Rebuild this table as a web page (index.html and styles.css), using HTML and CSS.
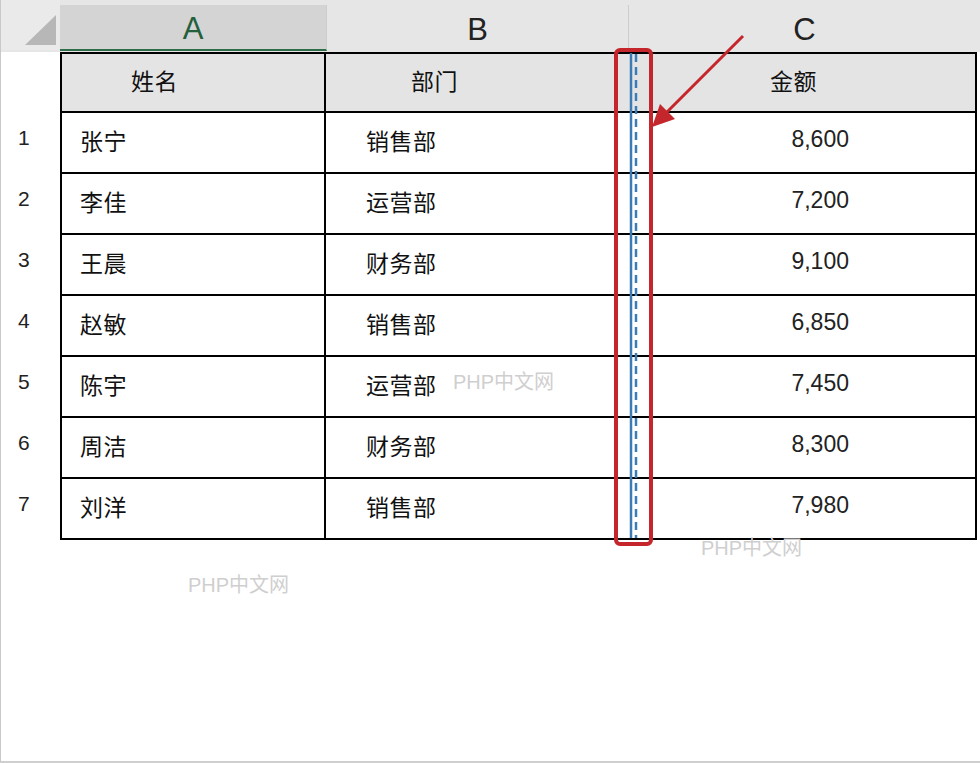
FILE: index.html
```html
<!DOCTYPE html>
<html lang="zh">
<head>
<meta charset="utf-8">
<title>Sheet</title>
<link rel="stylesheet" href="styles.css">
</head>
<body>
<div class="sheet">
  <div class="colbar">
    <div class="corner"><span class="corner-tri"></span></div>
    <div class="colhead colhead-a">A</div>
    <div class="colhead">B</div>
    <div class="colhead colhead-c">C</div>
  </div>
  <div class="table">
    <div class="row row-head">
      <div class="rownum"></div>
      <div class="cell cell-a"><span class="h-a">姓名</span></div>
      <div class="cell cell-b"><span class="h-b">部门</span></div>
      <div class="cell cell-c"><span class="h-c">金额</span></div>
    </div>
    <div class="row">
      <div class="rownum">1</div>
      <div class="cell cell-a">张宁</div>
      <div class="cell cell-b">销售部</div>
      <div class="cell cell-c num">8,600</div>
    </div>
    <div class="row">
      <div class="rownum">2</div>
      <div class="cell cell-a">李佳</div>
      <div class="cell cell-b">运营部</div>
      <div class="cell cell-c num">7,200</div>
    </div>
    <div class="row">
      <div class="rownum">3</div>
      <div class="cell cell-a">王晨</div>
      <div class="cell cell-b">财务部</div>
      <div class="cell cell-c num">9,100</div>
    </div>
    <div class="row">
      <div class="rownum">4</div>
      <div class="cell cell-a">赵敏</div>
      <div class="cell cell-b">销售部</div>
      <div class="cell cell-c num">6,850</div>
    </div>
    <div class="row">
      <div class="rownum">5</div>
      <div class="cell cell-a">陈宇</div>
      <div class="cell cell-b">运营部</div>
      <div class="cell cell-c num">7,450</div>
    </div>
    <div class="row">
      <div class="rownum">6</div>
      <div class="cell cell-a">周洁</div>
      <div class="cell cell-b">财务部</div>
      <div class="cell cell-c num">8,300</div>
    </div>
    <div class="row">
      <div class="rownum">7</div>
      <div class="cell cell-a">刘洋</div>
      <div class="cell cell-b">销售部</div>
      <div class="cell cell-c num">7,980</div>
    </div>
  </div>

  <span class="wm wm-1">PHP中文网</span>
  <span class="wm wm-2">PHP中文网</span>
  <span class="wm wm-3">PHP中文网</span>

  <svg class="annot" width="980" height="763" viewBox="0 0 980 763" xmlns="http://www.w3.org/2000/svg">
    <line x1="631" y1="53" x2="631" y2="538" stroke="#3b7cb6" stroke-width="2.5"/>
    <line x1="636" y1="54" x2="636" y2="538" stroke="#3b7cb6" stroke-width="2.5" stroke-dasharray="8 5"/>
    <rect x="616" y="50" width="35" height="494" rx="4" ry="4" fill="none" stroke="#c4262c" stroke-width="4"/>
    <line x1="743" y1="36" x2="665" y2="114" stroke="#c4262c" stroke-width="3"/>
    <polygon points="652,127 660,104 675,119" fill="#c4262c"/>
  </svg>
</div>
</body>
</html>
```

FILE: styles.css
```css
html, body {
  margin: 0;
  padding: 0;
  background: #ffffff;
}

body {
  width: 980px;
  height: 763px;
  overflow: hidden;
  font-family: "Noto Sans CJK SC", "Liberation Sans", sans-serif;
  color: #111;
}

.sheet {
  position: relative;
  width: 980px;
  height: 763px;
  box-sizing: border-box;
  border-left: 1px solid #c9c9c9;
  border-bottom: 2px solid #cfcfcf;
}

.colbar {
  display: grid;
  grid-template-columns: 59px 267px 302px 1fr;
  height: 52px;
  background: #e6e6e6;
}

.corner {
  position: relative;
  background: #eaeaea;
  height: 50px;
}

.corner-tri {
  position: absolute;
  left: 24px;
  top: 15px;
  width: 0;
  height: 0;
  border-style: solid;
  border-width: 0 0 30px 31px;
  border-color: transparent transparent #b7b7b7 transparent;
}

.colhead {
  display: flex;
  align-items: center;
  justify-content: center;
  font-family: "Liberation Sans", "DejaVu Sans", sans-serif;
  font-size: 31px;
  color: #222;
  border-right: 1px solid #cdcdcd;
  margin-top: 5px;
  height: 45px;
  padding-top: 4px;
  box-sizing: border-box;
}

.colhead-a {
  background: #d4d4d4;
  color: #24603c;
  border-bottom: 2px solid #2f6d48;
  height: 46px;
}

.colhead-c {
  border-right: none;
}

.table {
  display: flex;
  flex-direction: column;
  width: 976px;
}

.row {
  display: grid;
  grid-template-columns: 59px 266px 305px 1fr;
  height: 61px;
}

.rownum {
  display: flex;
  align-items: center;
  padding-left: 17px;
  padding-bottom: 12px;
  font-family: "Liberation Sans", "DejaVu Sans", sans-serif;
  font-size: 21px;
  color: #222;
}

.cell {
  display: flex;
  align-items: center;
  box-sizing: border-box;
  border-bottom: 2px solid #000;
  padding-bottom: 6px;
  font-size: 23px;
  font-weight: 400;
  letter-spacing: 0.5px;
}

.cell-a {
  border-left: 2px solid #000;
  border-right: 2px solid #000;
  padding-left: 18px;
}

.cell-b {
  padding-left: 40px;
}

.cell-c {
  border-right: 2px solid #000;
}

.row-head .cell {
  background: #e4e4e4;
  border-top: 2px solid #000;
}

.h-a {
  padding-left: 51px;
}

.h-b {
  padding-left: 45px;
}

.h-c {
  padding-left: 139px;
}

.num {
  justify-content: flex-end;
  padding-right: 126px;
  padding-bottom: 6px;
  font-family: "Liberation Sans", "DejaVu Sans", sans-serif;
  font-size: 23px;
  font-weight: 400;
  letter-spacing: 0;
  color: #222;
}

.wm {
  position: absolute;
  font-family: "Liberation Sans", "Noto Sans CJK SC", sans-serif;
  font-size: 20px;
  color: #cfcfcf;
  white-space: nowrap;
}

.wm-1 { left: 452px; top: 366px; }
.wm-2 { left: 700px; top: 532px; }
.wm-3 { left: 187px; top: 569px; }

.annot {
  position: absolute;
  left: -1px;
  top: 0;
  pointer-events: none;
}
```
